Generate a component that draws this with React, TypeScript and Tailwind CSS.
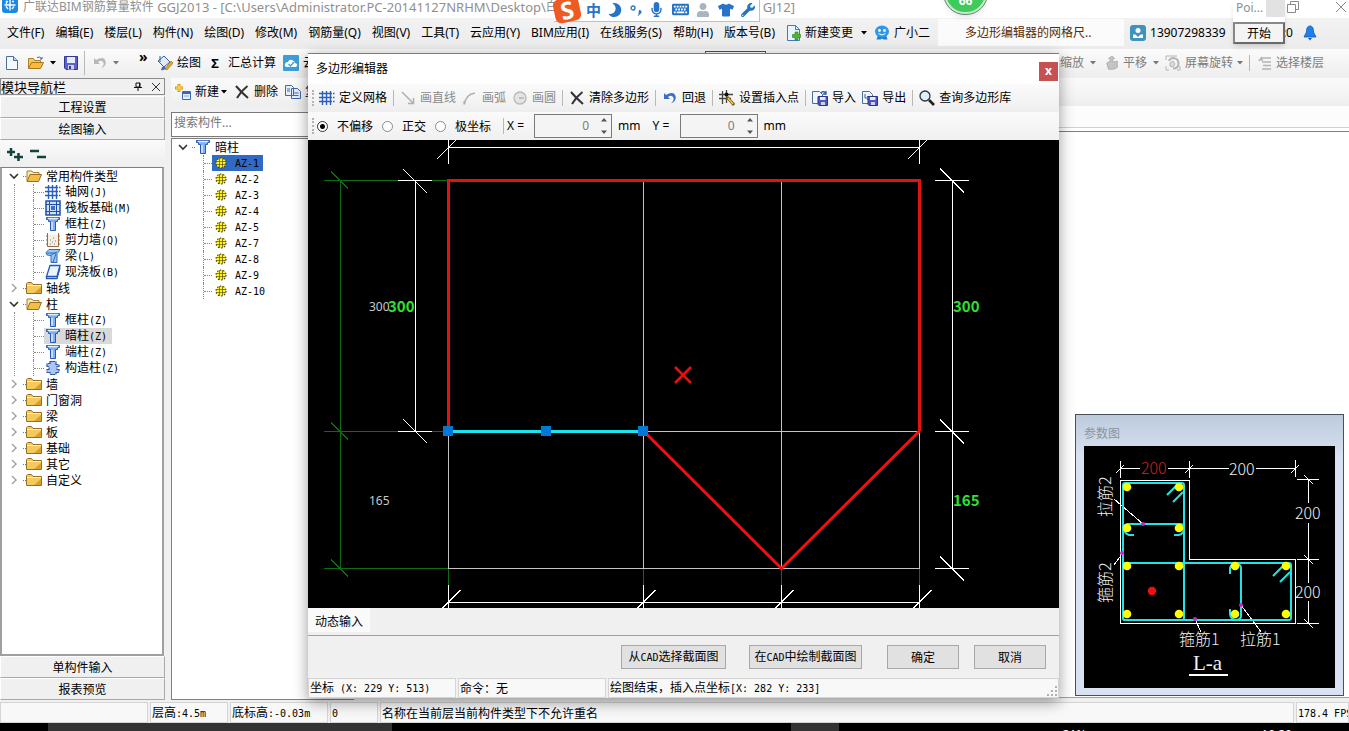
import type { ReactNode } from "react";
import { FaKeyboard, FaMicrophone, FaMoon, FaTshirt, FaUser, FaWrench } from "react-icons/fa";

const uiFont = "font-['Noto_Sans','Noto_Sans_CJK_SC',sans-serif]";
const songFont = "font-['Noto_Sans_CJK_SC',sans-serif]";

type IconKind = "folder" | "folderOpen" | "grid" | "raft" | "column" | "wall" | "beam" | "slab" | "tie" | "rebar";

type TreeNode = {
  label: string;
  icon: IconKind;
  selected?: boolean;
  children?: TreeNode[];
};

const moduleTree: TreeNode[] = [
  {
    label: "常用构件类型",
    icon: "folderOpen",
    children: [
      { label: "轴网(J)", icon: "grid" },
      { label: "筏板基础(M)", icon: "raft" },
      { label: "框柱(Z)", icon: "column" },
      { label: "剪力墙(Q)", icon: "wall" },
      { label: "梁(L)", icon: "beam" },
      { label: "现浇板(B)", icon: "slab" }
    ]
  },
  { label: "轴线", icon: "folder" },
  {
    label: "柱",
    icon: "folderOpen",
    children: [
      { label: "框柱(Z)", icon: "column" },
      { label: "暗柱(Z)", icon: "column", selected: true },
      { label: "端柱(Z)", icon: "column" },
      { label: "构造柱(Z)", icon: "tie" }
    ]
  },
  { label: "墙", icon: "folder" },
  { label: "门窗洞", icon: "folder" },
  { label: "梁", icon: "folder" },
  { label: "板", icon: "folder" },
  { label: "基础", icon: "folder" },
  { label: "其它", icon: "folder" },
  { label: "自定义", icon: "folder" }
];

const columns = ["AZ-1", "AZ-2", "AZ-3", "AZ-4", "AZ-5", "AZ-7", "AZ-8", "AZ-9", "AZ-10"];

const menus = [
  "文件(F)",
  "编辑(E)",
  "楼层(L)",
  "构件(N)",
  "绘图(D)",
  "修改(M)",
  "钢筋量(Q)",
  "视图(V)",
  "工具(T)",
  "云应用(Y)",
  "BIM应用(I)",
  "在线服务(S)",
  "帮助(H)",
  "版本号(B)"
];

export default function App() {
  return (
    <div className={`relative flex h-screen flex-col overflow-hidden bg-[#f0f0f0] text-xs text-black ${uiFont}`}>
      <TitleBar />
      <MenuBar />
      <MainToolbar />
      <div className="flex min-h-0 flex-1 pt-px">
        <ModulePanel />
        <ComponentPanel />
        <Workspace />
      </div>
      <StatusBar />
      <Taskbar />
      <PolygonEditor />
      <ParameterWindow />
      <InputMethodBar />
      <div className="absolute -top-7 left-[944px] flex h-[42px] w-[43px] items-end justify-center rounded-full border-2 border-[#c9e8cf] bg-[#3ecb5b] pb-1 text-xs font-bold leading-[14px] text-white shadow-md outline outline-[#5c8a66]">
        66
      </div>
      <PointerWindow />
    </div>
  );
}

// Half-width characters are set at half of the 12px ideograph.
function Song({ children }: { children: string }) {
  return (
    <span className={`whitespace-pre ${songFont}`}>
      {children.split(/([\x20-\x7e]+)/).map((part, index) =>
        index % 2 === 1 ? (
          <span key={index} className="font-['DejaVu_Sans_Mono',monospace] text-[10px]">
            {part}
          </span>
        ) : (
          part
        )
      )}
    </span>
  );
}

function TitleBar() {
  return (
    <header className="flex h-[18px] shrink-0 items-center bg-white pl-[2px] text-[#8f8f8f]">
      <svg viewBox="0 0 16 16" className="size-4 shrink-0 -translate-y-1">
        <rect width="16" height="16" rx="3" fill="#1e88e0" />
        <path d="M8 2.500v11M2.500 8h11M6 4.500H4.500V7M10 4.500h2M4 9.500l2 2.500M12 9.500 10 12" stroke="#fff" strokeWidth="1.400" fill="none" />
      </svg>
      <h1 className="flex whitespace-pre pb-1 pl-[5px] leading-4">
        <span>广联达BIM钢筋算量软件</span>
        <span className="text-[13px]"> GGJ2013 - [C:\Users\Administrator.PC-20141127NRHM\Desktop\</span>
        <span>白</span>
        <span className="ml-[205px] text-[13px]">GJ12]</span>
      </h1>
      <div className="ml-auto flex gap-9 pb-[5px] pr-[2px]">
        <button type="button" aria-label="还原">
          <svg viewBox="0 0 12 12" className="size-3" fill="none" stroke="#8a8a8a">
            <path d="M.5 3.500h8v8h-8zM3.500 3V.5h8v8H9" />
          </svg>
        </button>
        <button type="button" aria-label="关闭">
          <svg viewBox="0 0 12 12" className="size-3" stroke="#8a8a8a">
            <path d="m1 1 10 10M11 1 1 11" />
          </svg>
        </button>
      </div>
    </header>
  );
}

function Caret({ muted = false }: { muted?: boolean }) {
  return (
    <svg viewBox="0 0 6 4" className={`h-1 w-[6px] shrink-0 ${muted ? "text-[#777]" : "text-black"}`}>
      <path d="M0 0h6L3 3.500z" fill="currentColor" />
    </svg>
  );
}

function Divider() {
  return <span className="h-4 w-px shrink-0 bg-[#b8b8b8]" />;
}

function MenuBar() {
  return (
    <nav className="flex h-[31px] shrink-0 items-center whitespace-nowrap bg-gradient-to-b from-[#f2f2f2] to-[#ececec] pb-[2px] pl-[7px]">
      <div className="flex gap-[11px]">
        {menus.map((menu) => (
          <button type="button" key={menu}>
            {menu}
          </button>
        ))}
      </div>
      <button type="button" className="ml-3 flex items-center gap-1">
        <svg viewBox="0 0 14 16" className="h-4 w-[14px]">
          <path d="M.5.5h8l4 4v11H.5z" fill="#e8f4ff" stroke="#3c7fb8" />
          <path d="M8.500.5v4h4" fill="none" stroke="#3c7fb8" />
          <path d="M8 7h3v2.500h2.500v3H11V15H8v-2.500H5.500v-3H8z" fill="#4cb82e" stroke="#2a8014" strokeWidth=".6" />
        </svg>
        <span>新建变更</span>
        <span className="pl-1">
          <Caret />
        </span>
      </button>
      <button type="button" className="ml-[7px] flex items-center gap-1">
        <svg viewBox="0 0 16 16" className="size-4">
          <path d="M4 10h8l1.500 4.500H9.500L8 13.500l-1.500 1H2.500z" fill="#1f7fd4" />
          <ellipse cx="8" cy="6.500" rx="7" ry="6" fill="#2f97e8" />
          <circle cx="5.500" cy="5.500" r="1.400" fill="#fff" />
          <circle cx="10.500" cy="5.500" r="1.400" fill="#fff" />
          <path d="M4.500 8.500q3.500 3 7 0" stroke="#fff" fill="none" />
        </svg>
        <span>广小二</span>
      </button>
      <a href="#tips" className="ml-2 flex h-[27px] w-[186px] items-center bg-[#fbfbfb] pl-[27px] text-[#5a2a00]">
        多边形编辑器的网格尺..
      </a>
      <button type="button" className="ml-[6px] flex items-center gap-1">
        <svg viewBox="0 0 16 16" className="size-4">
          <rect width="16" height="16" rx="3" fill="#3f93bd" />
          <circle cx="8" cy="5.500" r="2.500" fill="#fff" />
          <path d="M3 13V9.500h2.500L8 12l2.500-2.500H13V13z" fill="#fff" />
        </svg>
        <span>13907298339</span>
      </button>
      <span className="ml-auto">:0</span>
      <svg viewBox="0 0 14 16" className="ml-[10px] mr-8 h-4 w-[14px] shrink-0">
        <path d="M7 1C4 1 3.500 4 3.500 7L1 12h12l-2.500-5C10.500 4 10 1 7 1z" fill="#1e80ee" stroke="#1558b0" strokeWidth=".8" />
        <path d="M5 13h4l-2 2.500z" fill="#1558b0" />
      </svg>
    </nav>
  );
}

function DocIcon() {
  return (
    <svg viewBox="0 0 12 14" className="h-[14px] w-3 shrink-0">
      <path d="M.5.5h7l4 4v9H.5z" fill="#f4f9ff" stroke="#4a6ea0" />
      <path d="M7.500.5v4h4" fill="#b8d0f0" stroke="#4a6ea0" />
    </svg>
  );
}

function OpenIcon() {
  return (
    <svg viewBox="0 0 16 14" className="h-[14px] w-4 shrink-0">
      <path d="M.5 12.500v-10h5l1 2h6v3" fill="#f4c95a" stroke="#b08020" />
      <path d="m.5 12.500 3-6h12l-3 6z" fill="#f9b93a" stroke="#a87820" />
      <path d="M9 1.500q3-1.500 5 1.500m0-2v2h-2" fill="none" stroke="#3b68b0" />
    </svg>
  );
}

function SaveIcon() {
  return (
    <svg viewBox="0 0 14 14" className="size-[14px] shrink-0">
      <path d="M.5.5h13v13H2l-1.500-1.500z" fill="#5a62c8" stroke="#30379a" />
      <path d="M3 1h8v6H3z" fill="#e8ecff" />
      <path d="M4 9h6v4.500H4z" fill="#d0d4e8" />
      <path d="M5 10h2v3H5z" fill="#30379a" />
    </svg>
  );
}

function UndoIcon({ muted = false }: { muted?: boolean }) {
  return (
    <svg viewBox="0 0 14 14" className={`size-[14px] shrink-0 ${muted ? "text-[#b8b8b8]" : "text-[#3d6cc4]"}`}>
      <path d="M1 2v6h6L5 6q3-2.500 5 0t-2 6.500q6-3 4.500-7.500T6 2.500L3 4z" fill="currentColor" />
    </svg>
  );
}

function CrossIcon() {
  return (
    <svg viewBox="0 0 14 14" className="size-[14px] shrink-0" stroke="#333" fill="none">
      <path d="M1 1q5 6 12 12" strokeWidth="2" />
      <path d="M12.500 1Q6 6 2 13" strokeWidth="2" />
    </svg>
  );
}

function MainToolbar() {
  return (
    <div className="flex h-7 shrink-0 items-center whitespace-nowrap bg-gradient-to-b from-[#fbfbfb] to-[#eeeeee] pl-[6px]">
      <button type="button" aria-label="新建">
        <DocIcon />
      </button>
      <button type="button" aria-label="打开" className="ml-[10px] flex items-center gap-[6px]">
        <OpenIcon />
        <Caret />
      </button>
      <button type="button" aria-label="保存" className="ml-2">
        <SaveIcon />
      </button>
      <span className="ml-[6px] h-6 w-px bg-[#b8b8b8]" />
      <button type="button" aria-label="撤销" className="ml-2 flex items-center gap-[6px]">
        <UndoIcon muted />
        <Caret muted />
      </button>
      <span className="ml-5 w-2 pb-3 text-sm font-bold leading-4">»</span>
      <button type="button" className="ml-[10px] flex items-center gap-1">
        <svg viewBox="0 0 16 16" className="size-4">
          <path d="m1 6 6-5 6 6-6 5z" fill="#dfe9f8" stroke="#3a5f9c" />
          <path d="M3 1v6" stroke="#3a5f9c" />
          <path d="m8 14 6-8 2 2-6 7z" fill="#e8a820" stroke="#906010" strokeWidth=".6" />
          <path d="M5 12q3-1 4 1-2 3-5 2z" fill="#3a6fc4" />
        </svg>
        <span>绘图</span>
      </button>
      <button type="button" className="ml-[9px] flex items-center gap-2">
        <span className="w-[10px] text-[13px] font-bold leading-4">Σ</span>
        <span>汇总计算</span>
      </button>
      <button type="button" className="ml-[7px] flex items-center gap-1">
        <svg viewBox="0 0 16 16" className="size-4">
          <rect width="16" height="16" rx="1" fill="#3a9fd8" />
          <path d="M4 12q-3-.5-2-3t3-2q1-3 4-2t3 3q3 .5 2 3l-1 1z" fill="#fff" />
          <path d="m5.500 9 2 2 3.500-4" fill="none" stroke="#3a9fd8" strokeWidth="1.300" />
        </svg>
        <span>云</span>
      </button>
      <span className="ml-[390px] h-6 w-[61px] border border-[#44546a] bg-white" />
      <div className="ml-auto flex items-center text-[#7d7d7d]">
        <button type="button" className="flex items-center gap-[6px]">
          缩放
          <Caret muted />
        </button>
        <button type="button" className="ml-[9px] flex items-center gap-1">
          <svg viewBox="0 0 16 16" className="size-[14px]">
            <path d="M2 8q4-3 4-1V3h-2l4-3 3 3H9v4l5-1v7l-4 2H4z" fill="#c4c4c4" stroke="#aaa" />
          </svg>
          平移
          <span className="pl-[2px]">
            <Caret muted />
          </span>
        </button>
        <button type="button" className="ml-[6px] flex items-center gap-1">
          <svg viewBox="0 0 16 16" className="size-4" fill="none" stroke="#b4b4b4">
            <path d="M1 5V1h11M1 11v4h3M15 11v4h-3" />
            <path d="M4 6q1-3 4.500-3 5 .5 5 5.500T8 13.500" strokeWidth="2" />
            <path d="M5 11V8l3-2 2 3-2 3z" fill="#ddd" />
          </svg>
          屏幕旋转
          <Caret muted />
        </button>
        <span className="ml-[6px] mr-2 flex">
          <Divider />
        </span>
        <button type="button" className="mr-[25px] flex items-center gap-1">
          <svg viewBox="0 0 14 14" className="size-[14px]" fill="none" stroke="#b4b4b4" strokeWidth="1.500">
            <path d="M5 2h8M4 6h9M5 9.500h8M4 13h9M1 5l3-4M4 1v4" />
          </svg>
          选择楼层
        </button>
      </div>
    </div>
  );
}

function NodeIcon({ kind }: { kind: IconKind }) {
  return (
    <svg viewBox="0 0 16 16" className="size-4 shrink-0">
      {kind === "folder" && (
        <>
          <path d="M.5 13.500v-10l1-1h4l1.500 2h8.500v9z" fill="#f4ca5c" stroke="#94702a" />
          <path d="M8 13 15 7v6z" fill="#dc9f2c" />
          <path d="M1 5.500h14" stroke="#fdf3c4" />
        </>
      )}
      {kind === "folderOpen" && (
        <>
          <path d="M1 13V3h5l1 1.500h6V7" fill="#fbe9a8" stroke="#a9802f" />
          <path d="m1 13.500 3-7h11.500l-3 7z" fill="#f4bf45" stroke="#94702a" />
        </>
      )}
      {kind === "grid" && <path d="M3.500 1v14M7.500 1v14M11.500 1v14M0 3.500h13M0 7.500h13M0 11.500h13M14 3.500h1.500M14 7.500h1.500M14 11.500h1.500" stroke="#2c60b8" strokeWidth="1.400" />}
      {kind === "raft" && (
        <>
          <path d="M1 1h14v14H1z" fill="#cfe0fa" stroke="#1f4fa8" strokeWidth="1.500" />
          <path d="M4.500 1v14M11.500 1v14M1 4.500h14M1 11.500h14" stroke="#1f4fa8" />
          <path d="M6 6h4v4H6z" fill="#3b70cc" />
        </>
      )}
      {kind === "column" && (
        <>
          <path d="M1.500 1.500h13v2h-2v2h-2v9h-5v-9h-2v-2h-2z" fill="#7fb0f4" stroke="#2558b4" />
          <path d="M3 2.500h10M7 6v8" stroke="#e3f0ff" strokeWidth="1.400" />
        </>
      )}
      {kind === "wall" && (
        <>
          <path d="M1.500 2.500h13v12h-13z" fill="#f6efe2" />
          <path d="M2.500 1v13.500h11V1" fill="none" stroke="#9a6a42" />
          <path d="M1 4h1M1 8h1M1 12h1M14 4h1M14 8h1M14 12h1M5 8h1M8 6h1M10 9h1M7 10h1M5 12h1M9 12h1" stroke="#7c7c8c" />
        </>
      )}
      {kind === "beam" && (
        <>
          <path d="M1 4.500 4 1.500h11l-2 3-1 1v9H6v-7L2 7z" fill="#9cc6f6" stroke="#2b6cb8" />
          <path d="m6 7 6-3M8 14l3-8M2 5h9" stroke="#2b6cb8" />
        </>
      )}
      {kind === "slab" && (
        <>
          <path d="M5 1.500h10l-3 11H1.500z" fill="#eaf4ff" stroke="#2558b4" strokeWidth="1.300" />
          <path d="M1.500 12.500v2h10.500l3-11" fill="none" stroke="#2558b4" strokeWidth="1.300" />
        </>
      )}
      {kind === "tie" && (
        <path d="M5 1.500h6v3h3v2h-2v3h2v3h-3v2H5v-2H2v-3h2v-3H2v-3h3z" fill="#a9c6f4" stroke="#3458a0" strokeWidth="1.200" strokeDasharray="5 1" />
      )}
      {kind === "rebar" && (
        <>
          <circle cx="8" cy="8" r="5" fill="#fff12e" />
          <circle cx="8" cy="8" r="5" fill="none" stroke="#4a4400" strokeWidth="1.200" strokeDasharray="1.400 1.740" />
          <path d="M6.500 3v10M9.500 3v10M3 6.500h10M3 9.500h10" stroke="#5c5600" strokeWidth=".7" />
        </>
      )}
    </svg>
  );
}

function Chevron({ open }: { open: boolean }) {
  return (
    <svg viewBox="0 0 10 10" className="size-[10px] shrink-0" fill="none">
      {open ? <path d="m1 3 4 4 4-4" stroke="#333" strokeWidth="1.600" /> : <path d="m3 1 4 4-4 4" stroke="#a0a0a0" strokeWidth="1.400" />}
    </svg>
  );
}

function ModulePanel() {
  const tab = "flex h-[22px] shrink-0 items-center justify-center border border-[#a8a8a8] border-l-white border-t-white bg-[#f0f0f0]";

  return (
    <aside className="flex w-[165px] shrink-0 flex-col">
      <div className="flex h-[17px] shrink-0 items-center border border-[#8c8c8c] bg-[#f0f0f0] text-[13px] leading-[15px]">
        <span className={songFont}>模块导航栏</span>
        <button type="button" aria-label="固定" className="ml-auto">
          <svg viewBox="0 0 10 10" className="size-[10px]" fill="none" stroke="#111">
            <path d="M3 1h4v4H3zM6.500 1v4M1 5.500h8M5 5v4" />
          </svg>
        </button>
        <button type="button" aria-label="关闭" className="ml-2 mr-[3px]">
          <svg viewBox="0 0 10 10" className="size-[10px]" stroke="#333">
            <path d="m1 1 8 8M9 1 1 9" />
          </svg>
        </button>
      </div>
      <button type="button" className={`mt-px ${tab}`}>
        <Song>工程设置</Song>
      </button>
      <button type="button" className={tab}>
        <Song>绘图输入</Song>
      </button>
      <div className="flex h-[27px] shrink-0 items-center gap-[6px] bg-gradient-to-b from-[#fafafa] to-[#eeeeee] pl-[6px]">
        <button type="button" aria-label="全部展开">
          <svg viewBox="0 0 18 14" className="h-[14px] w-[18px]" stroke="#12433c" strokeWidth="2.500">
            <path d="M1 5h8M5 1v8M8 10h9M12.500 6v8" />
          </svg>
        </button>
        <button type="button" aria-label="全部折叠">
          <svg viewBox="0 0 18 14" className="h-[14px] w-[18px]" stroke="#12433c" strokeWidth="2.500">
            <path d="M0 4h9M7 10h9" />
          </svg>
        </button>
      </div>
      <ul className="mr-px min-h-0 flex-1 overflow-hidden border-2 border-t border-[#a0a0a0] border-t-[#808080] bg-white leading-4">
        {moduleTree.map((node) => (
          <li key={node.label}>
            <button type="button" className="flex h-4 items-center pl-[7px]">
              <Chevron open={Boolean(node.children)} />
              <span className="ml-1 w-[3px] border-t border-dotted border-[#777]" />
              <NodeIcon kind={node.icon} />
              <span className="pl-1">
                <Song>{node.label}</Song>
              </span>
            </button>
            {node.children ? (
              <ul className="ml-3 border-l border-dotted border-[#888] pl-[18px]">
                {node.children.map((child) => (
                  <li key={child.label} className="flex h-4 items-center border-l border-dotted border-[#888]">
                    <span className="w-[10px] border-t border-dotted border-[#888]" />
                    <button type="button" className={`flex h-4 items-center gap-1 pl-px pr-[5px] ${child.selected ? "bg-[#d9d9d9]" : ""}`}>
                      <NodeIcon kind={child.icon} />
                      <Song>{child.label}</Song>
                    </button>
                  </li>
                ))}
              </ul>
            ) : null}
          </li>
        ))}
      </ul>
      <button type="button" className={tab}>
        <Song>单构件输入</Song>
      </button>
      <button type="button" className={tab}>
        <Song>报表预览</Song>
      </button>
    </aside>
  );
}

function ComponentPanel() {
  return (
    <section className="ml-[6px] flex w-[183px] shrink-0 flex-col overflow-hidden whitespace-nowrap">
      <div className="flex h-7 shrink-0 items-center bg-gradient-to-b from-[#fbfbfb] to-[#eeeeee] pl-1">
        <button type="button" className="flex items-center gap-1">
          <svg viewBox="0 0 16 16" className="size-4">
            <path d="M4 0v8M0 4h8" stroke="#d8a010" strokeWidth="3" />
            <path d="M4 1v6M1 4h6" stroke="#ffe870" />
            <path d="M7.500 7.500h8v8h-8z" fill="#e4eefc" stroke="#3b68b0" />
            <path d="M8 9h7" stroke="#3b68b0" strokeWidth="2" />
            <path d="M9 12h5" stroke="#8aa8d8" />
          </svg>
          新建
        </button>
        <span className="ml-[2px]">
          <Caret />
        </span>
        <button type="button" className="ml-2 flex items-center gap-[5px]">
          <CrossIcon />
          删除
        </button>
        <button type="button" className="ml-[7px] flex items-center gap-1">
          <svg viewBox="0 0 16 14" className="h-[14px] w-4" fill="#e4eefc" stroke="#3b68b0">
            <path d="M.5.500h6l2 2v8h-8zM6.500 3.500h6l3 3v7h-9z" />
            <path d="M8.500 8h5M8.500 10.500h5M2 4h3M2 6h3" />
          </svg>
          复
        </button>
      </div>
      <input
        type="text"
        aria-label="搜索构件"
        placeholder="搜索构件..."
        className="mt-[6px] h-[25px] w-full shrink-0 border border-[#7a7a7a] bg-white px-[2px] pb-1 text-xs placeholder:text-[#777]"
      />
      <div className="mt-px min-h-0 flex-1 border-y border-l border-[#808080] bg-white leading-4">
        <button type="button" className="flex h-4 items-center pl-[6px]">
          <Chevron open />
          <span className="ml-1 w-[3px] border-t border-dotted border-[#777]" />
          <NodeIcon kind="column" />
          <span className="pl-1">
            <Song>暗柱</Song>
          </span>
        </button>
        <ul className="ml-[31px]">
          {columns.map((name, index) => (
            <li key={name} className="flex h-4 items-center border-l border-dotted border-[#888]">
              <span className="w-2 border-t border-dotted border-[#888]" />
              <button type="button" className={`flex h-4 items-center gap-[6px] pl-px pr-1 ${index === 0 ? "bg-[#316ac5]" : ""}`}>
                <NodeIcon kind="rebar" />
                <Song>{name}</Song>
              </button>
            </li>
          ))}
        </ul>
      </div>
    </section>
  );
}

function Workspace() {
  return (
    <main className="flex min-w-0 flex-1 flex-col">
      <div className="h-7 shrink-0 bg-gradient-to-b from-[#fbfbfb] to-[#eeeeee]" />
      <div className="h-[22px] shrink-0 border-b border-[#d0d0d0] bg-[#fcfcfc]" />
      <div className="h-1 shrink-0 border-b border-[#808080] bg-white" />
      <div className="mb-[2px] flex-1 border-b border-[#a0a0a0] bg-white" />
    </main>
  );
}

function StatusBar() {
  const cell = "flex h-[21px] items-center overflow-hidden whitespace-nowrap border border-[#d4d4d4] bg-[#f8f8f8] pl-px";

  return (
    <footer className="mt-[2px] flex shrink-0 gap-[2px] overflow-hidden leading-4">
      <div className={`${cell} w-[148px] shrink-0`} />
      <div className={`${cell} w-[78px] shrink-0`}>
        <Song>层高:4.5m</Song>
      </div>
      <div className={`${cell} w-[98px] shrink-0`}>
        <Song>底标高:-0.03m</Song>
      </div>
      <div className={`${cell} w-12 shrink-0`}>
        <Song>0</Song>
      </div>
      <div className={`${cell} min-w-0 flex-1`}>
        <Song>名称在当前层当前构件类型下不允许重名</Song>
      </div>
      <div className={`${cell} w-[53px] shrink-0`}>
        <Song>178.4 FPS</Song>
      </div>
    </footer>
  );
}

function Taskbar() {
  return (
    <div className="flex h-2 shrink-0 items-start overflow-hidden bg-black text-xs leading-4 text-white">
      <span className="ml-12 h-2 w-[344px] bg-[#333]" />
      <span className="ml-[399px] h-2 w-12 bg-[#333]" />
      <span className="ml-auto mr-[175px] mt-1">21%</span>
      <span className="mr-[57px] mt-1">19:29</span>
    </div>
  );
}

function InputMethodBar() {
  return (
    <div className="absolute left-[554px] top-0 flex h-[22px] w-[206px] items-center border-b border-r border-[#a9c4e4] bg-white pb-[2px] text-[#2673c8]">
      <span className="flex h-6 w-[26px] shrink-0 -rotate-12 items-center justify-center rounded-md bg-[#ee5a24] text-2xl font-bold leading-6 text-white">S</span>
      <div className="flex flex-1 items-center justify-between pl-[6px] pr-1">
        <span className="text-[15px] font-bold leading-4">中</span>
        <FaMoon className="size-[14px] -scale-x-100" />
        <svg viewBox="0 0 12 12" className="size-3">
          <circle cx="3" cy="4" r="2" fill="none" stroke="currentColor" strokeWidth="1.300" />
          <path d="M9 6a2 2 0 1 1 1 4q-1 2-2.500 2 1-1 1-2z" fill="currentColor" />
        </svg>
        <FaMicrophone className="size-[15px]" />
        <FaKeyboard className="size-[17px]" />
        <FaUser className="size-[14px] text-[#a8b4c0]" />
        <FaTshirt className="size-4" />
        <FaWrench className="size-[14px]" />
      </div>
    </div>
  );
}

function PointerWindow() {
  return (
    <div className="absolute left-[1233px] top-0 w-[52px] bg-white shadow-md">
      <div className="flex h-[22px] items-start justify-between pl-[3px] text-[#8f8f8f]">
        <span className="leading-4">Poi...</span>
        <span className="h-[17px] w-[19px] bg-[#e2e2e2]" />
      </div>
      <button type="button" className="h-[22px] w-full border-2 border-[#6a6a6a] border-l-[#888] border-t-[#888] bg-[#f4f4f4] leading-4">
        <Song>开始</Song>
      </button>
    </div>
  );
}

function ToolButton({ label, icon, muted = false }: { label: string; icon: ReactNode; muted?: boolean }) {
  return (
    <button type="button" className={`flex items-center gap-1 ${muted ? "text-[#8a8a8a]" : ""}`}>
      <span className="flex w-4 justify-center">{icon}</span>
      {label}
    </button>
  );
}

function Grip() {
  return <span className="h-4 w-0 border-l-2 border-dotted border-[#b4b4b4]" />;
}

function TransferIcon({ out = false }: { out?: boolean }) {
  return (
    <svg viewBox="0 0 16 16" className="size-4">
      <path d="M.5 1.500h7l3 3v9H.5z" fill="#f2f7ff" stroke="#4a6ea0" />
      <path d="M6 6.500h9.500v9H7l-1-1z" fill="#4f57b8" stroke="#2c3388" />
      <path d="M8 7h5.500v3H8z" fill="#e8ecff" />
      <path d="M9 12h4v3H9z" fill="#cdd2ea" />
      {out ? <path d="M3 4v4h4M5 6l2 2-2 2" fill="none" stroke="#2f5ca8" /> : <path d="M9 3q3-3 5 1m0-3v3h-3" fill="none" stroke="#2f5ca8" strokeWidth="1.300" />}
    </svg>
  );
}

function EditorToolbar() {
  return (
    <div className="flex h-7 items-center whitespace-nowrap bg-gradient-to-b from-[#fbfbfb] to-[#eeeeee] pl-1">
      <Grip />
      <div className="ml-[5px] flex items-center gap-[6px]">
        <ToolButton label="定义网格" icon={<NodeIcon kind="grid" />} />
        <Divider />
        <div className="flex gap-[6px]">
          <ToolButton
            muted
            label="画直线"
            icon={
              <svg viewBox="0 0 14 14" className="size-[14px]" fill="none" stroke="#b0b0b0" strokeWidth="1.500">
                <path d="m1 1 11 11M12.500 7v5.500H7" />
              </svg>
            }
          />
          <ToolButton
            muted
            label="画弧"
            icon={
              <svg viewBox="0 0 14 14" className="size-[14px]" fill="none" stroke="#b0b0b0" strokeWidth="1.300">
                <path d="M1.500 13.500Q2.500 3.500 12 2M1 10v3.500" />
              </svg>
            }
          />
          <ToolButton
            muted
            label="画圆"
            icon={
              <svg viewBox="0 0 14 14" className="size-[14px]" fill="#e4e4e4" stroke="#b8b8b8" strokeWidth="1.300">
                <circle cx="7" cy="7" r="6" />
                <path d="M7 7h4M6 7h2M7 6v2" />
              </svg>
            }
          />
        </div>
        <Divider />
        <ToolButton label="清除多边形" icon={<CrossIcon />} />
        <Divider />
        <ToolButton label="回退" icon={<UndoIcon />} />
        <Divider />
        <ToolButton
          label="设置插入点"
          icon={
            <svg viewBox="0 0 16 16" className="size-4">
              <path d="M3.500 1v13M7.500 0v13M0 4.500h14M0 8.500h12" stroke="#444" strokeWidth="1.300" />
              <path d="m8 7 7 8" stroke="#7a5a10" strokeWidth="3" />
              <path d="m9 8 5 6" stroke="#f4d050" strokeWidth="1.300" />
              <circle cx="7.500" cy="4.500" r="2" fill="#111" />
            </svg>
          }
        />
        <Divider />
        <ToolButton label="导入" icon={<TransferIcon />} />
        <ToolButton label="导出" icon={<TransferIcon out />} />
        <Divider />
        <ToolButton
          label="查询多边形库"
          icon={
            <svg viewBox="0 0 16 16" className="size-4">
              <circle cx="6" cy="6" r="5" fill="#dff0fb" stroke="#333" strokeWidth="1.300" />
              <path d="m10 10 5 5" stroke="#222" strokeWidth="2.600" />
            </svg>
          }
        />
      </div>
    </div>
  );
}

function ModeRadio({ label, checked = false }: { label: string; checked?: boolean }) {
  return (
    <label className="flex items-center gap-[9px]">
      <input
        type="radio"
        name="offset-mode"
        defaultChecked={checked}
        className="size-[11px] appearance-none rounded-full border border-[#8a8a8a] bg-white checked:border-[#333] checked:bg-[radial-gradient(circle,#000_0_2px,#fff_3px)]"
      />
      <span className={songFont}>{label}</span>
    </label>
  );
}

function OffsetField({ axis }: { axis: string }) {
  return (
    <label className="flex items-center gap-[6px]">
      <span className="w-[21px] whitespace-pre">{axis} =</span>
      <span className="flex h-6 w-[78px] items-center border border-[#7a7a7a] bg-[#f4f4f4] pr-1">
        <input type="text" defaultValue="0" className="w-0 min-w-0 flex-1 bg-transparent pr-3 text-right text-xs text-[#7d7d7d]" />
        <svg viewBox="0 0 6 16" className="h-4 w-[6px]" fill="#555">
          <path d="M0 3.500 3 0l3 3.500zM0 12.500 3 16l3-3.500z" />
        </svg>
      </span>
      mm
    </label>
  );
}

function EditorModeBar() {
  return (
    <div className="flex h-7 items-center whitespace-nowrap bg-gradient-to-b from-[#fafafa] to-[#f0f0f0] pl-1">
      <Grip />
      <div className="ml-[3px] flex items-center gap-[9px]">
        <ModeRadio label="不偏移" checked />
        <ModeRadio label="正交" />
        <ModeRadio label="极坐标" />
      </div>
      <span className="ml-3 mr-[3px] flex">
        <Divider />
      </span>
      <div className="flex gap-3">
        <OffsetField axis="X" />
        <OffsetField axis="Y" />
      </div>
    </div>
  );
}

function PolygonCanvas() {
  const xs = [448.5, 643.5, 781.5, 919.5];
  const ys = [180.5, 431.5, 568.5];

  return (
    <svg viewBox="308 140 751 468" className="block w-full bg-black" fill="none" shapeRendering="crispEdges">
      <g stroke="#0d6b14">
        <path d="M340.500 180v388M324 180.500h124M324 431.500h124M324 568.500h124" />
        {ys.map((y) => (
          <path key={y} d={`M331 ${y - 9}l17 17`} />
        ))}
        {xs.map((x) => (
          <path key={x} d={`M${x} 568v17`} />
        ))}
      </g>
      <path d="M448.500 431v138M643.500 180v389M781.500 180v389M919.500 431v138M643 431.500h276M448 568.500h472" stroke="#c4c4c4" />
      <g stroke="#fff">
        <path d="M448 147.500h472M448.500 140v24M919.500 140v24M437 159l19-19M908 159l19-19" />
        <path d="M415.500 180v251M398 180.500h34M398 431.500h34M403 169l24 24M403 419l24 24" />
        <path d="M952.500 180v389" />
        {ys.map((y) => (
          <path key={y} d={`M935 ${y}h34M940 ${y - 12}l24 24`} />
        ))}
        <path d="M448 602.500h472" />
        {xs.map((x) => (
          <path key={x} d={`M${x} 585v23M${x - 6} 608l18-18`} />
        ))}
      </g>
      <path d="M448.500 431V180.500h471V431" stroke="#e11212" strokeWidth="3" />
      <path d="M919.500 431 781.500 568.500 643.500 431" stroke="#f01010" strokeWidth="3" shapeRendering="auto" />
      <path d="M448 431.500h195" stroke="#19e5ee" strokeWidth="3" />
      <path d="M443 426h10v10h-10zM541 426h10v10h-10zM638 426h10v10h-10z" fill="#0078d7" />
      <path d="m675 367 16 16M691 367l-16 16" stroke="#e81010" strokeWidth="2.500" shapeRendering="auto" />
      <g fill="#c8c8c8" fontSize="12" className={uiFont}>
        <text x="369" y="311">
          300
        </text>
        <text x="369" y="505">
          165
        </text>
      </g>
      <g fill="#30e030" fontSize="15" fontWeight="700" className={songFont}>
        <text x="388" y="312">
          300
        </text>
        <text x="953" y="312">
          300
        </text>
        <text x="953" y="506">
          165
        </text>
      </g>
    </svg>
  );
}

function PolygonEditor() {
  const button = "h-6 border border-[#a8a8a8] bg-[#e1e1e1] leading-4";
  const cell = "flex h-5 items-center border border-[#d4d4d4] bg-[#f8f8f8] pl-px";

  return (
    <section
      aria-label="多边形编辑器"
      className="absolute left-[308px] top-[53px] w-[751px] border-t border-[#3f8ad0] bg-[#f0f0f0] shadow-[0_4px_14px_rgba(0,0,0,0.4)]"
    >
      <div className="flex h-[30px] items-center justify-between bg-white pl-2 pr-px">
        <h2>多边形编辑器</h2>
        <button type="button" className="mt-1 h-[19px] w-[19px] bg-[#c75050] text-xs font-bold leading-4 text-white">
          x
        </button>
      </div>
      <EditorToolbar />
      <EditorModeBar />
      <PolygonCanvas />
      <div className="flex h-7 items-start border-b border-[#a0a0a0]">
        <span className="bg-[#fafafa] px-[7px] pb-[2px] pt-[6px] leading-4">动态输入</span>
      </div>
      <div className="flex h-[42px] items-center justify-end pr-[13px]">
        <button type="button" className={`${button} w-[105px]`}>
          <Song>从CAD选择截面图</Song>
        </button>
        <button type="button" className={`${button} ml-[23px] w-[113px]`}>
          <Song>在CAD中绘制截面图</Song>
        </button>
        <button type="button" className={`${button} ml-[25px] w-[72px]`}>
          <Song>确定</Song>
        </button>
        <button type="button" className={`${button} ml-[15px] w-[72px]`}>
          <Song>取消</Song>
        </button>
      </div>
      <div className="flex gap-[2px] leading-4">
        <div className={`${cell} w-[148px]`}>
          <Song>坐标 (X: 229 Y: 513)</Song>
        </div>
        <div className={`${cell} w-[148px]`}>
          <Song>命令：无</Song>
        </div>
        <div className={`${cell} flex-1 justify-between`}>
          <Song>绘图结束，插入点坐标[X: 282 Y: 233]</Song>
          <svg viewBox="0 0 12 12" className="size-3 self-end" fill="#b0b0b0">
            <path d="M9 1h2v2H9zM9 5h2v2H9zM9 9h2v2H9zM5 5h2v2H5zM5 9h2v2H5zM1 9h2v2H1z" />
          </svg>
        </div>
      </div>
    </section>
  );
}

const bars = [
  [1127, 487],
  [1179, 487],
  [1127, 528],
  [1179, 528],
  [1127, 566],
  [1179, 566],
  [1235, 566],
  [1286, 566],
  [1127, 614],
  [1179, 614],
  [1235, 614],
  [1286, 614]
];

const leaders = [
  [1143, 524],
  [1122, 553],
  [1195, 619],
  [1241, 605]
];

function ParameterWindow() {
  return (
    <section
      aria-label="参数图"
      className="absolute left-[1075px] top-[414px] w-[269px] border border-[#4a5058] bg-gradient-to-b from-[#bccbdd] to-[#d8e2f0] to-15% px-2 pb-[7px]"
    >
      <h2 className="h-[31px] pt-[11px] leading-4 text-[#8c949c]">参数图</h2>
      <svg viewBox="1084 446 251 242" className="block w-full bg-black" fill="none">
        <g stroke="#fff" shapeRendering="crispEdges">
          <path d="M1120.500 480.500h69v79h106v64h-175z" />
          <path d="M1120 468.500h20M1168 468.500h61M1256 468.500h39M1120.500 461v17M1189.500 461v17M1295.500 460v17" />
          <path d="m1116 473 8-8M1185 473l8-8M1291 473l8-8" />
          <path d="M1308.500 479v24M1308.500 523v60M1308.500 601v23M1297 479.500h22M1297 559.500h22M1297 623.500h22" />
          <path d="m1304 475 9 9M1304 555l9 9M1304 619l9 9" />
          <path d="m1114 499 29 25M1114 565l8-11M1195 619l6 13M1241 605l20 27" />
        </g>
        <g stroke="#22e4e4" strokeWidth="2">
          <rect x="1123" y="483" width="61" height="137" rx="2" />
          <rect x="1123" y="563" width="168" height="57" rx="2" />
          <path d="M1134 535h-5q-6-2-5-8 1-3 4-3h52q4 0 4 4 0 6-5 7h-5" />
          <path d="M1230 574v-6q1-4 5-4 6 0 6 4v48q0 4-6 4-5-2-5-6v-5" />
          <path d="m1167 495 9-9M1173 502l10-10M1273 576l11-11M1280 582l10-10" />
        </g>
        {bars.map(([x, y]) => (
          <circle key={`${x}-${y}`} cx={x} cy={y} r="4.300" fill="#ffff00" />
        ))}
        {leaders.map(([x, y]) => (
          <circle key={`${x}-${y}`} cx={x} cy={y} r="2" fill="#d020d0" />
        ))}
        <circle cx="1152" cy="591" r="4.200" fill="#f01010" />
        <g fill="#f0f0f0" fontSize="16" fontWeight="300" className={songFont}>
          <text x="1141" y="474" fill="#d02020">
            200
          </text>
          <text x="1229" y="475">
            200
          </text>
          <text x="1295" y="519">
            200
          </text>
          <text x="1295" y="598">
            200
          </text>
          <text x="1179" y="645">
            箍筋1
          </text>
          <text x="1240" y="645">
            拉筋1
          </text>
          <text transform="translate(1111 517) rotate(-90)">拉筋2</text>
          <text transform="translate(1111 603) rotate(-90)">箍筋2</text>
        </g>
        <text x="1193" y="670" fill="#f0f0f0" fontSize="21" className="font-['Liberation_Serif',serif]">
          L-a
        </text>
        <path d="M1189 675h39" stroke="#fff" strokeWidth="2" />
      </svg>
    </section>
  );
}
